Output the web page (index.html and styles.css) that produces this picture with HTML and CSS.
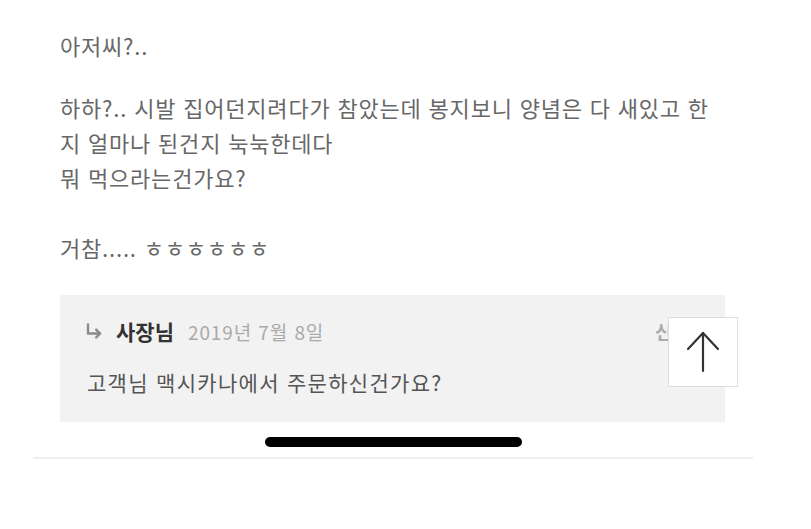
FILE: index.html
```html
<!DOCTYPE html>
<html lang="ko">
<head>
<meta charset="UTF-8" />
<meta name="viewport" content="width=device-width, initial-scale=1" />
<title>리뷰</title>
<link rel="stylesheet" href="styles.css">
</head>
<body>

<!-- REVIEW -->
<div class="review">
  <p class="para first">아저씨?..</p>
  <p class="para">하하?.. 시발 집어던지려다가 참았는데 봉지보니 양념은 다 새있고 한지 얼마나 된건지 눅눅한데다<br>뭐 먹으라는건가요?</p>
  <p class="para last">거참..... ㅎㅎㅎㅎㅎㅎ</p>

  <!-- OWNER REPLY -->
  <div class="reply">
    <div class="reply-head">
      <svg class="reply-arrow" width="16" height="16" viewBox="0 0 16 16" fill="none" stroke="#8a8a8a" stroke-width="2.4" stroke-linecap="round" stroke-linejoin="round">
        <path d="M2 1.5 V10.5 H14" />
        <path d="M10.2 6.7 L14 10.5 L10.2 14.3" />
      </svg>
      <span class="reply-name">사장님</span>
      <span class="reply-date">2019년 7월 8일</span>
      <span class="reply-report">신고</span>
    </div>
    <div class="reply-body">고객님 맥시카나에서 주문하신건가요?</div>
  </div>
</div>

<div class="divider"></div>

<!-- OVERLAYS -->
<button class="to-top" title="맨 위로">
  <svg width="36" height="44" viewBox="0 0 36 44" fill="none" stroke="#333" stroke-width="2.2" stroke-linecap="round" stroke-linejoin="round">
    <path d="M18 3 V41" />
    <path d="M3 19 L18 3 L33 19" />
  </svg>
</button>
<div class="home-bar"></div>

</body>
</html>
```

FILE: styles.css
```css
* {
  box-sizing: border-box;
  margin: 0;
  padding: 0;
}
html, body {
  background: #fff;
  font-family: "Noto Sans CJK KR", "Noto Sans", sans-serif;
  color: #676767;
}
body {
  position: relative;
  width: 811px;
  min-height: 529px;
}

/* REVIEW TEXT */
.review {
  padding: 28px 86px 0 60px;
}
.para {
  font-size: 22px;
  line-height: 35px;
  margin-top: 27px;
  letter-spacing: 0.8px;
}
.para.first {
  margin-top: 0;
}
.para.last {
  margin-top: 35px;
}

/* REPLY BOX */
.reply {
  margin-top: 30px;
  background: #f2f2f2;
  padding: 21px 35px 25px 26px;
  height: 127px;
}
.reply-head {
  display: flex;
  align-items: center;
  height: 30px;
}
.reply-arrow {
  margin-right: 14px;
  flex-shrink: 0;
}
.reply-name {
  font-size: 21px;
  font-weight: 700;
  color: #333;
  margin-right: 14px;
}
.reply-date {
  font-size: 19px;
  color: #aaa;
  letter-spacing: 0.9px;
}
.reply-report {
  margin-left: auto;
  font-size: 19px;
  color: #aaa;
  font-weight: 700;
}
.reply-body {
  margin-top: 21px;
  padding-left: 1px;
  font-size: 21px;
  line-height: 30px;
  color: #555;
  letter-spacing: 1.3px;
}

.divider {
  margin: 35px 58px 0 33px;
  height: 2px;
  background: #eee;
}

/* FLOATING */
.to-top {
  position: absolute;
  top: 317px;
  left: 668px;
  width: 70px;
  height: 70px;
  background: #fff;
  border: 1px solid #ddd;
  display: flex;
  align-items: center;
  justify-content: center;
  cursor: pointer;
}
.home-bar {
  position: absolute;
  top: 437px;
  left: 265px;
  width: 257px;
  height: 10px;
  border-radius: 5px;
  background: #000;
}
```
